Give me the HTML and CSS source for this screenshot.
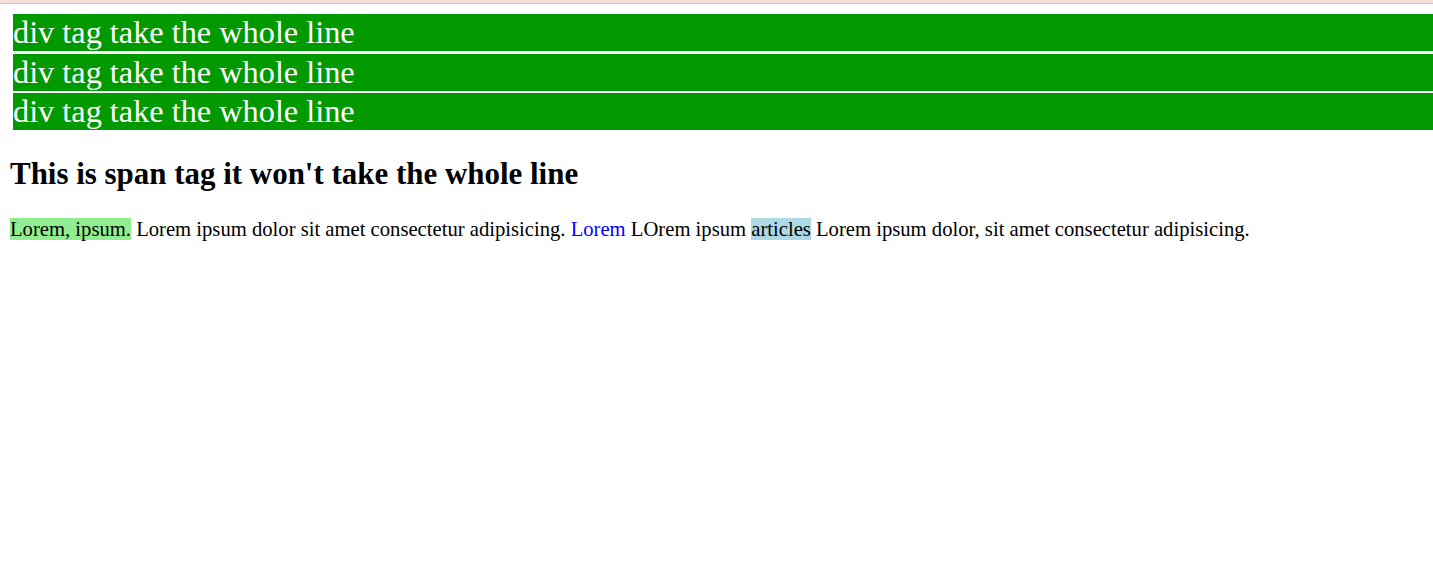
FILE: index.html
```html
<!DOCTYPE html>
<html>
<head>
<meta charset="utf-8">
<link rel="stylesheet" href="styles.css">
</head>
<body>
<div class="topbar"></div>
<main class="page">
  <div class="box">div tag take the whole line</div>
  <div class="box">div tag take the whole line</div>
  <div class="box">div tag take the whole line</div>
  <h2 class="title">This is span tag it won't take the whole line</h2>
  <p class="text"><span class="hl-green">Lorem, ipsum.</span> Lorem ipsum dolor sit amet consectetur adipisicing. <span class="blue">Lorem</span> LOrem ipsum <span class="hl-blue">articles</span> Lorem ipsum dolor, sit amet consectetur adipisicing.</p>
</main>
</body>
</html>
```

FILE: styles.css
```css
html, body {
  margin: 0;
  padding: 0;
  background: #ffffff;
}
body {
  font-family: "Liberation Serif", "Times New Roman", serif;
  color: #000;
}
.topbar {
  height: 3px;
  background: #f8ded8;
  border-bottom: 1px solid #dcc4bd;
}
.page {
  padding: 10px 0 10px 10px;
}
.box {
  background: #009900;
  color: #ffffff;
  font-size: 32.3px;
  line-height: 37px;
  margin: 0 0 2.5px 3px;
}
.title {
  font-size: 30.95px;
  font-weight: bold;
  margin: 27px 0 0 0;
  line-height: 34.5px;
}
.text {
  font-size: 20.65px;
  line-height: 23px;
  margin: 26px 0 0 0;
}
.hl-green {
  background: #90ee90;
}
.hl-blue {
  background: #add8e6;
}
.blue {
  color: #0000ff;
}
```
